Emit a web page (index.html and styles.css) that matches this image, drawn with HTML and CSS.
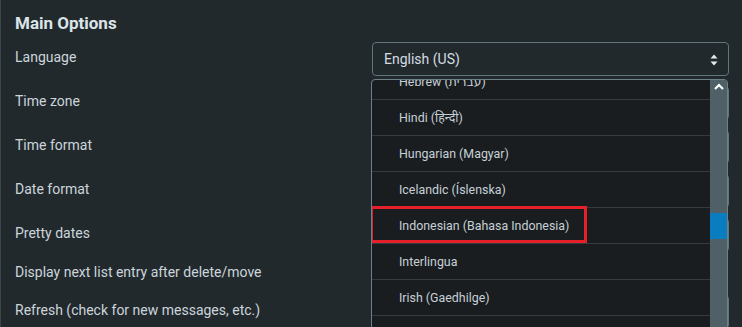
FILE: index.html
```html
<!DOCTYPE html>
<html lang="en">
<head>
    <meta charset="UTF-8">
    <title>Main Options</title>
    <link rel="stylesheet" href="styles.css">
</head>
<body>
<div class="panel">
    <h2>Main Options</h2>

    <div class="row">
        <label>Language</label>
        <div class="field">
            <div class="select">
                <span>English (US)</span>
                <svg class="arrows" width="8" height="12" viewBox="0 0 8 12"><path d="M4 0.5 L7.5 4.5 H0.5 Z M4 11.5 L7.5 7.5 H0.5 Z" fill="#e4ebee"/></svg>
            </div>
            <div class="dropdown">
                <ul class="options">
                    <li>Hebrew (עברית)</li>
                    <li>Hindi (हिन्दी)</li>
                    <li>Hungarian (Magyar)</li>
                    <li>Icelandic (Íslenska)</li>
                    <li>Indonesian (Bahasa Indonesia)</li>
                    <li>Interlingua</li>
                    <li>Irish (Gaedhilge)</li>
                    <li>Italian (Italiano)</li>
                </ul>
                <div class="scrollbar">
                    <svg class="up" width="10" height="7" viewBox="0 0 10 7"><path d="M1 6 L5 2 L9 6" fill="none" stroke="#ffffff" stroke-width="2.2"/></svg>
                    <div class="thumb"></div>
                </div>
                <div class="highlight"></div>
            </div>
        </div>
    </div>

    <div class="row">
        <label>Time zone</label>
        <div class="field"><div class="select"></div></div>
    </div>
    <div class="row">
        <label>Time format</label>
        <div class="field"><div class="select"></div></div>
    </div>
    <div class="row">
        <label>Date format</label>
        <div class="field"><div class="select"></div></div>
    </div>
    <div class="row">
        <label>Pretty dates</label>
        <div class="field"><div class="select"></div></div>
    </div>
    <div class="row check">
        <label>Display next list entry after delete/move</label>
        <div class="field"></div>
    </div>
    <div class="row">
        <label>Refresh (check for new messages, etc.)</label>
        <div class="field"><div class="select"></div></div>
    </div>
</div>
</body>
</html>
```

FILE: styles.css
```css
html, body {
    margin: 0;
    height: 100%;
    overflow: hidden;
}
body {
    background: #22292d;
    font: normal 14px/20px Roboto, "Noto Sans", "DejaVu Sans", sans-serif;
    color: #cbd5db;
}
.panel {
    border-left: 1px solid #3b454a;
    padding: 12px 0 0 14px;
    width: 714px;
    height: 100%;
}
h2 {
    font-size: 17px;
    line-height: 22px;
    font-weight: bold;
    color: #dbe4e8;
    margin: 0 0 8px;
}
.row {
    display: grid;
    grid-template-columns: 357px 357px;
    align-items: center;
    min-height: 34px;
    margin-bottom: 10px;
}
.row label {
    padding-bottom: 5px;
}
.row.check {
    min-height: 20px;
    margin-bottom: 13px;
}
.row.check label {
    padding-bottom: 0;
}
.field {
    position: relative;
}
.select {
    box-sizing: border-box;
    height: 34px;
    border: 1px solid #5f747c;
    border-radius: 4px;
    display: flex;
    align-items: center;
    justify-content: space-between;
    padding: 0 10px 0 11px;
    font-size: 14px;
    color: #d3dce1;
}
.arrows {
    margin-top: 1px;
}
.dropdown {
    position: absolute;
    z-index: 10;
    top: 37px;
    left: -1px;
    width: 357px;
    height: 300px;
    box-sizing: border-box;
    border: 1px solid #6d8189;
    border-radius: 4px 4px 0 0;
    background: #191d20;
    overflow: hidden;
    display: flex;
}
.options {
    list-style: none;
    margin: -16px 0 0;
    padding: 0;
    flex: 1;
}
.options li {
    height: 35px;
    line-height: 35px;
    border-bottom: 1px solid #353b3f;
    padding-left: 27px;
    font-size: 12.4px;
    color: #c6d0d6;
}
.scrollbar {
    width: 17px;
    background: #4f6067;
    position: relative;
}
.scrollbar .up {
    display: block;
    margin: 3px auto 0;
}
.thumb {
    position: absolute;
    left: 0;
    right: 0;
    top: 133px;
    height: 26px;
    background: #0a7dc0;
}
.highlight {
    position: absolute;
    left: -2px;
    top: 126px;
    width: 211px;
    height: 31px;
    border: 3px solid #e5202a;
}
```
